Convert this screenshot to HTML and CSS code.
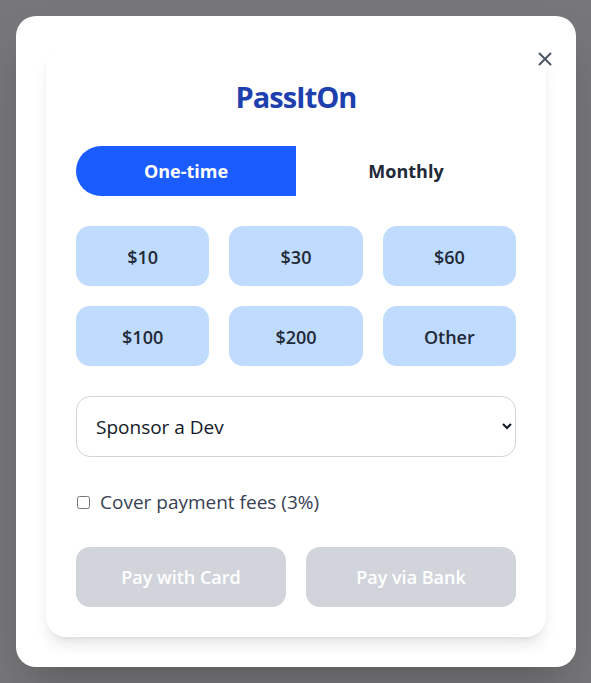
FILE: index.html
```html
<!DOCTYPE html>
<html lang="en">
<head>
<meta charset="utf-8">
<title>PassItOn</title>
<link rel="stylesheet" href="styles.css">
</head>
<body>
<div class="overlay">
  <div class="modal">
    <button class="close" aria-label="Close">
      <svg width="14" height="14" viewBox="0 0 14 14"><path d="M1.5 1.5 L12.5 12.5 M12.5 1.5 L1.5 12.5" stroke="#4b5563" stroke-width="2" stroke-linecap="round" fill="none"/></svg>
    </button>
    <div class="card">
      <h1 class="title">PassItOn</h1>
      <div class="toggle">
        <button class="tab tab-active">One-time</button>
        <button class="tab">Monthly</button>
      </div>
      <div class="amounts">
        <button class="amount">$10</button>
        <button class="amount">$30</button>
        <button class="amount">$60</button>
        <button class="amount">$100</button>
        <button class="amount">$200</button>
        <button class="amount">Other</button>
      </div>
      <select class="fund">
        <option>Sponsor a Dev</option>
      </select>
      <label class="fees"><input type="checkbox" class="fees-box"><span>Cover payment fees (3%)</span></label>
      <div class="pay">
        <button class="pay-btn" disabled>Pay with Card</button>
        <button class="pay-btn" disabled>Pay via Bank</button>
      </div>
    </div>
  </div>
</div>
</body>
</html>
```

FILE: styles.css
```css
* { box-sizing: border-box; }
html, body { margin: 0; padding: 0; }
body {
  background: #77777a;
  font-family: "Open Sans", "Noto Sans", sans-serif;
}
.overlay {
  min-height: 100vh;
  padding: 16px;
  display: flex;
  align-items: flex-start;
}
.modal {
  position: relative;
  flex-shrink: 0;
  width: 560px;
  height: 651px;
  background: #ffffff;
  border-radius: 20px;
  padding: 30px;
  box-shadow: 0 25px 50px -12px rgba(0,0,0,0.25);
}
.close {
  position: absolute;
  top: 35px;
  right: 23px;
  width: 16px;
  height: 16px;
  padding: 0;
  border: 0;
  background: transparent;
  display: flex;
  align-items: center;
  justify-content: center;
  cursor: pointer;
  z-index: 2;
}
.card {
  background: #ffffff;
  border-radius: 20px;
  padding: 30px;
  box-shadow: 0 10px 15px -3px rgba(0,0,0,0.1), 0 4px 6px -4px rgba(0,0,0,0.1);
  display: flex;
  flex-direction: column;
}
.title {
  margin: 0 0 29px;
  text-align: center;
  font-size: 29px;
  line-height: 41px;
  font-weight: 700;
  letter-spacing: -1px;
  color: #1e40af;
}
.toggle {
  display: grid;
  grid-template-columns: 1fr 1fr;
  height: 50px;
  margin-bottom: 30px;
}
.tab {
  border: 0;
  background: #ffffff;
  font-family: inherit;
  font-size: 18px;
  font-weight: 700;
  color: #1f2937;
  padding: 0;
}
.tab-active {
  background: #1a5cff;
  color: #ffffff;
  border-radius: 25px 0 0 25px;
}
.amounts {
  display: grid;
  grid-template-columns: repeat(3, 1fr);
  gap: 20px;
  margin-bottom: 30px;
}
.amount {
  height: 60px;
  border: 0;
  border-radius: 14px;
  background: #bfdbfe;
  font-family: inherit;
  font-size: 18px;
  font-weight: 600;
  color: #1f2937;
  padding: 2px 0 0;
}
.fund {
  height: 61px;
  width: 100%;
  border: 1px solid #d1d5db;
  border-radius: 14px;
  background: #ffffff;
  font-family: inherit;
  font-size: 19px;
  color: #111827;
  padding: 0 6px 0 15px;
  margin: 0 0 30px;
}
.fees {
  display: flex;
  align-items: center;
  gap: 10px;
  height: 30px;
  font-size: 19px;
  color: #374151;
  margin-bottom: 30px;
}
.fees-box {
  width: 13px;
  height: 13px;
  margin: 0 0 0 1px;
}
.pay {
  display: grid;
  grid-template-columns: 1fr 1fr;
  gap: 20px;
}
.pay-btn {
  height: 60px;
  border: 0;
  border-radius: 14px;
  background: #d1d5db;
  color: #ffffff;
  font-family: inherit;
  font-size: 18px;
  font-weight: 600;
  padding: 0;
}
```
